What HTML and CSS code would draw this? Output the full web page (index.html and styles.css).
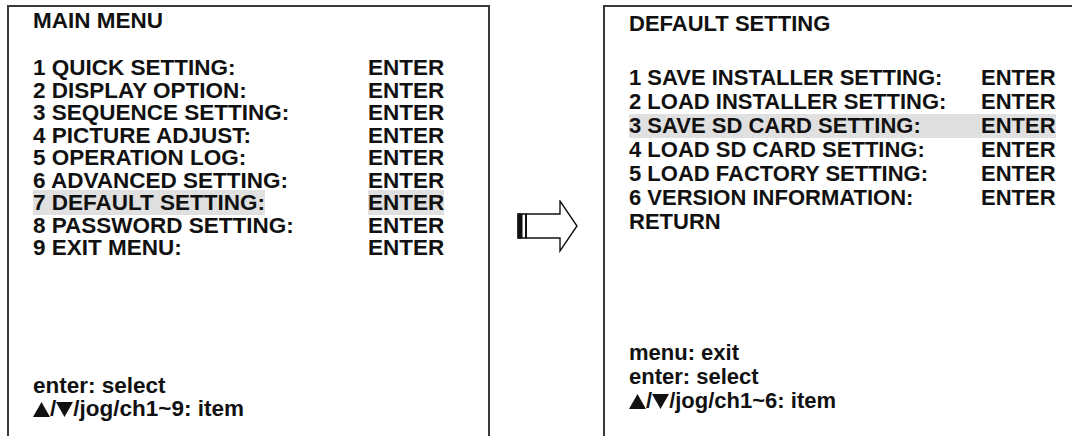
FILE: index.html
```html
<!DOCTYPE html>
<html>
<head>
  <title>Main Menu / Default Setting</title>
  <meta name="viewport" content="width=device-width, initial-scale=1">
  <link rel="stylesheet" href="styles.css">
</head>
<body>
  <div class="screens">
    <div class="panel main">
      <h1>MAIN MENU</h1>
      <div class="rows">
        <div class="row"><span>1 QUICK SETTING:</span><span>ENTER</span></div>
        <div class="row"><span>2 DISPLAY OPTION:</span><span>ENTER</span></div>
        <div class="row"><span>3 SEQUENCE SETTING:</span><span>ENTER</span></div>
        <div class="row"><span>4 PICTURE ADJUST:</span><span>ENTER</span></div>
        <div class="row"><span>5 OPERATION LOG:</span><span>ENTER</span></div>
        <div class="row"><span>6 ADVANCED SETTING:</span><span>ENTER</span></div>
        <div class="row selected"><span><em>7 DEFAULT SETTING:</em></span><span><em>ENTER</em></span></div>
        <div class="row"><span>8 PASSWORD SETTING:</span><span>ENTER</span></div>
        <div class="row"><span>9 EXIT MENU:</span><span>ENTER</span></div>
      </div>
      <div class="help">
        <div>enter: select</div>
        <div><svg class="tri" viewBox="0 0 17 15"><path d="M8.5 0 L17 15 L0 15 Z"/></svg>/<svg class="tri" viewBox="0 0 17 15"><path d="M0 0 L17 0 L8.5 15 Z"/></svg>/jog/ch1~9: item</div>
      </div>
    </div>

    <div class="between">
      <svg class="arrow" width="62" height="54" viewBox="0 0 62 54">
        <path d="M1 14 H43 V1 L60 26 L43 51 V38 H1 Z" fill="#fff" stroke="#111" stroke-width="1.4" stroke-linejoin="miter"/>
        <rect x="0.5" y="13.5" width="5" height="25" fill="#111"/>
        <rect x="8" y="13.5" width="2" height="25" fill="#111"/>
      </svg>
    </div>

    <div class="panel sub">
      <h1>DEFAULT SETTING</h1>
      <div class="rows">
        <div class="row"><span>1 SAVE INSTALLER SETTING:</span><span>ENTER</span></div>
        <div class="row"><span>2 LOAD INSTALLER SETTING:</span><span>ENTER</span></div>
        <div class="row selected"><span>3 SAVE SD CARD SETTING:</span><span>ENTER</span></div>
        <div class="row"><span>4 LOAD SD CARD SETTING:</span><span>ENTER</span></div>
        <div class="row"><span>5 LOAD FACTORY SETTING:</span><span>ENTER</span></div>
        <div class="row"><span>6 VERSION INFORMATION:</span><span>ENTER</span></div>
        <div class="row"><span>RETURN</span></div>
      </div>
      <div class="help">
        <div>menu: exit</div>
        <div>enter: select</div>
        <div><svg class="tri" viewBox="0 0 17 15"><path d="M8.5 0 L17 15 L0 15 Z"/></svg>/<svg class="tri" viewBox="0 0 17 15"><path d="M0 0 L17 0 L8.5 15 Z"/></svg>/jog/ch1~6: item</div>
      </div>
    </div>
  </div>
</body>
</html>
```

FILE: styles.css
```css
*, *::before, *::after {
  box-sizing: border-box;
  margin: 0;
  padding: 0;
}

html, body {
  height: 100%;
  overflow: hidden;
}

body {
  font-family: "Liberation Sans", Arial, sans-serif;
  font-weight: bold;
  background-color: #ffffff;
  color: #111111;
}

.screens {
  display: flex;
  padding: 5px 0 0 7px;
}

.panel {
  height: 460px;
  border: 2px solid #3a3a3a;
  border-bottom: none;
  flex-shrink: 0;
}

h1 {
  font-size: inherit;
  font-weight: bold;
}

.row {
  display: grid;
}

.row em {
  font-style: normal;
  background: #e0e0e0;
}

.tri {
  width: 17px;
  height: 15px;
  fill: #111;
  vertical-align: -1px;
}

/* left screen: main menu */
.main {
  width: 483px;
  padding: 3px 0 0 24px;
  font-size: 22.5px;
  line-height: 22.5px;
}

.main h1 {
  margin-bottom: 24.5px;
}

.main .row {
  grid-template-columns: 335px auto;
}

.main .help {
  margin-top: 115.5px;
}

/* arrow between the screens */
.between {
  width: 113px;
  flex-shrink: 0;
  padding: 195px 0 0 27px;
}

.arrow {
  display: block;
}

/* right screen: default setting */
.sub {
  width: 520px;
  border-right: none;
  padding: 5px 0 0 24px;
  font-size: 22px;
  line-height: 24px;
}

.sub h1 {
  margin-bottom: 30px;
}

.sub .row {
  grid-template-columns: 352px auto;
  width: max-content;
}

.sub .row.selected {
  background: #e0e0e0;
}

.sub .help {
  margin-top: 107px;
}
```
